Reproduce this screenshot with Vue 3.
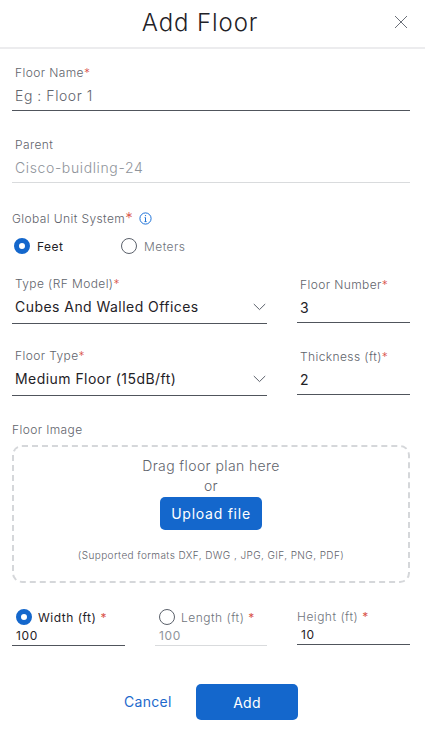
<script setup>
const topRows = [
  { label: 'Type (RF Model)', value: 'Cubes And Walled Offices', side: 'Floor Number', sideValue: '3' },
  { label: 'Floor Type', value: 'Medium Floor (15dB/ft)', side: 'Thickness (ft)', sideValue: '2' },
]
</script>

<template>
  <div class="modal">
    <header class="head">
      <h1 class="title">Add Floor</h1>
      <svg class="close" width="14" height="14" viewBox="0 0 14 14" aria-label="Close">
        <path d="M1 1 L13 13 M13 1 L1 13" stroke="#6b7079" stroke-width="1" fill="none" />
      </svg>
    </header>

    <main class="form">
      <div class="field name">
        <div class="label inset">Floor Name<span class="req">*</span></div>
        <div class="value inset placeholder">Eg : Floor 1</div>
      </div>

      <div class="field parent disabled">
        <div class="label inset">Parent</div>
        <div class="value inset muted">Cisco-buidling-24</div>
      </div>

      <div class="unit-label">
        <span>Global Unit System</span><span class="req big">*</span>
        <svg class="info" width="13" height="13" viewBox="0 0 13 13">
          <circle cx="6.5" cy="6.5" r="5.6" fill="none" stroke="#1d72d8" stroke-width="1" />
          <path d="M6.5 5.6 V9.6 M5.5 9.6 H7.6 M5.6 5.6 H6.5" stroke="#1d72d8" stroke-width="1" fill="none" />
          <circle cx="6.5" cy="3.6" r=".7" fill="#1d72d8" />
        </svg>
      </div>

      <div class="radios">
        <span class="radio-item feet"><span class="radio on"></span><span class="dark">Feet</span></span>
        <span class="radio-item meters"><span class="radio"></span><span class="grey">Meters</span></span>
      </div>

      <div v-for="row in topRows" :key="row.label" class="pair">
        <div class="field select">
          <div class="label inset">{{ row.label }}<span class="req">*</span></div>
          <div class="value inset dark select-value">
            <span>{{ row.value }}</span>
            <svg class="chev" width="13" height="8" viewBox="0 0 13 8">
              <path d="M.8 1 L6.5 6.6 L12.2 1" fill="none" stroke="#5b616b" stroke-width="1" />
            </svg>
          </div>
        </div>
        <div class="field side">
          <div class="label inset">{{ row.side }}<span class="req">*</span></div>
          <div class="value inset dark">{{ row.sideValue }}</div>
        </div>
      </div>

      <div class="image-label">Floor Image</div>
      <div class="drop">
        <div class="drag">Drag floor plan here</div>
        <div class="or">or</div>
        <button class="upload" type="button">Upload file</button>
        <div class="formats">(Supported formats DXF, DWG , JPG, GIF, PNG, PDF)</div>
      </div>

      <div class="dims">
        <div class="dim">
          <div class="dim-label"><span class="radio on small"></span><span class="dark">Width (ft)</span><span class="req gap">*</span></div>
          <div class="dim-value dark">100</div>
        </div>
        <div class="dim off">
          <div class="dim-label"><span class="radio small"></span><span class="grey">Length (ft)</span><span class="req gap">*</span></div>
          <div class="dim-value muted">100</div>
        </div>
        <div class="dim">
          <div class="dim-label height"><span class="grey">Height (ft)</span><span class="req gap">*</span></div>
          <div class="dim-value dark pad">10</div>
        </div>
      </div>

      <div class="actions">
        <button class="cancel" type="button">Cancel</button>
        <button class="add" type="button">Add</button>
      </div>
    </main>
  </div>
</template>

<style>
html, body { margin: 0; background: #fff; }
</style>

<style scoped>
.modal {
  width: 425px;
  height: 731px;
  overflow: hidden;
  background: #fff;
  font-family: Inter, "Liberation Sans", sans-serif;
  color: #6b7079;
}
.head {
  height: 47px;
  border-bottom: 2px solid #ececee;
  position: relative;
  display: flex;
  justify-content: center;
  align-items: center;
}
.title {
  margin: 0 25px 2px 0;
  font-size: 24px;
  line-height: 30px;
  font-weight: 300;
  letter-spacing: .9px;
  color: #1f2227;
}
.close { position: absolute; left: 394px; top: 15px; }
.form { padding: 0 15px 0 12px; }
.field { border-bottom: 1px solid #50555c; }
.inset { padding-left: 3px; }
.label {
  font-size: 12px;
  line-height: 16px;
  font-weight: 300;
  letter-spacing: .4px;
  color: #5f646c;
}
.value {
  font-size: 14px;
  line-height: 20px;
  letter-spacing: .45px;
}
.name { margin-top: 16px; padding-bottom: 4px; }
.name .value { margin-top: 5px; font-weight: 300; letter-spacing: .55px; }
.placeholder { color: #5f646c; }
.parent { margin-top: 26px; padding-bottom: 4px; border-bottom-color: #d9dbdd; }
.parent .value { margin-top: 5px; font-weight: 300; letter-spacing: .62px; }
.muted { color: #8f949b; }
.dark { color: #1f2227; }
.grey { color: #6f747c; font-weight: 300; }
.req { color: #d9534a; }
.big { font-size: 15px; line-height: 12px; }
.unit-label {
  margin-top: 27px;
  height: 16px;
  display: flex;
  align-items: center;
  font-size: 12px;
  font-weight: 300;
  letter-spacing: .4px;
  color: #5f646c;
}
.info { margin-left: 6px; }
.radios {
  margin-top: 12px;
  height: 16px;
  display: flex;
  font-size: 12px;
  letter-spacing: .45px;
}
.radio-item { display: flex; align-items: center; gap: 7px; }
.feet { margin-left: 2px; width: 107px; }
.radio {
  width: 16px;
  height: 16px;
  box-sizing: border-box;
  border: 1px solid #5b616b;
  border-radius: 50%;
  flex: none;
}
.radio.on { border: 5px solid #1467cc; background: #fff; }
.pair {
  display: flex;
  justify-content: space-between;
  align-items: flex-start;
  margin-top: 22px;
}
.pair + .pair { margin-top: 24px; }
.select { width: 255px; padding-bottom: 6px; }
.side { width: 113px; margin-top: 1px; padding-bottom: 4px; }
.select .value, .side .value { margin-top: 5px; }
.select-value { display: flex; justify-content: space-between; align-items: center; padding-right: 1px; }
.image-label {
  margin-top: 26px;
  font-size: 12px;
  line-height: 16px;
  font-weight: 300;
  letter-spacing: .4px;
  color: #5f646c;
}
.drop {
  margin-top: 7px;
  height: 138px;
  box-sizing: border-box;
  border: 2px dashed #d5d7da;
  border-radius: 10px;
  display: flex;
  flex-direction: column;
  align-items: center;
  padding-top: 9px;
}
.drag, .or { font-size: 14px; line-height: 20px; font-weight: 300; letter-spacing: .4px; color: #5f646c; }
.upload {
  margin-top: 1px;
  width: 102px;
  height: 33px;
  border: 0;
  border-radius: 5px;
  background: #1467cc;
  color: #fff;
  font: 400 14px Inter, "Liberation Sans", sans-serif;
  letter-spacing: .75px;
}
.formats { margin-top: 18px; font-size: 10px; line-height: 14px; font-weight: 300; letter-spacing: .41px; color: #5f646c; }
.dims {
  margin-top: 26px;
  display: grid;
  grid-template-columns: 113px 112px 113px;
  column-gap: 30px;
}
.dim-label {
  height: 16px;
  display: flex;
  align-items: center;
  gap: 6px;
  font-size: 12px;
  letter-spacing: .5px;
  padding-left: 4px;
}
.gap { margin-left: -2px; }
.height { padding-left: 0; margin-top: -1px; margin-bottom: 1px; }
.dim-value {
  margin-top: 3px;
  font-size: 12px;
  line-height: 16px;
  letter-spacing: .6px;
  padding: 0 0 1px 4px;
  border-bottom: 1px solid #50555c;
}
.off .dim-value { border-bottom-color: #d9dbdd; }
.actions {
  margin-top: 38px;
  display: flex;
  align-items: center;
}
.cancel {
  margin-left: 112px;
  width: 47px;
  padding: 0 0 2px;
  border: 0;
  background: none;
  color: #1d69cc;
  font: 400 14px Inter, "Liberation Sans", sans-serif;
  letter-spacing: .3px;
}
.add {
  margin-left: 25px;
  width: 102px;
  height: 36px;
  border: 0;
  border-radius: 5px;
  background: #1467cc;
  color: #fff;
  font: 400 14px Inter, "Liberation Sans", sans-serif;
  letter-spacing: .3px;
}
</style>
